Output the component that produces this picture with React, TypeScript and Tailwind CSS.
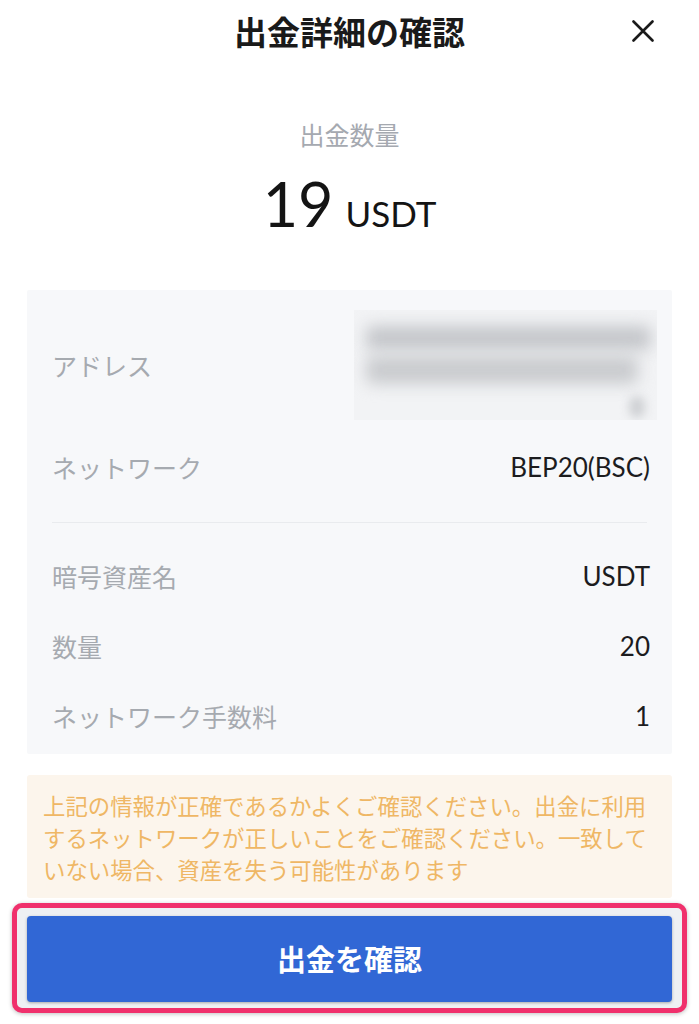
import React from "react";

const jp = "font-['Noto_Sans_CJK_JP','Noto_Sans',sans-serif]";
const lat = "font-['Lato','Noto_Sans_CJK_JP',sans-serif]";

function Row({ label, value }: { label: string; value: string }) {
  return (
    <div className="flex h-[70px] items-center justify-between pl-[25px] pr-[22px]">
      <span className={`${jp} text-[25px] leading-none text-[#a6aab0]`}>{label}</span>
      <span className={`${lat} text-[26px] leading-none text-[#1c1c1e]`}>{value}</span>
    </div>
  );
}

export default function App() {
  return (
    <div className="w-[699px] h-[1024px] bg-white overflow-hidden flex flex-col">
      {/* header */}
      <div className="grid h-[62px] grid-cols-[1fr_auto_1fr] items-center">
        <div />
        <h1 className={`${jp} text-[33px] font-bold leading-none text-[#1a1a1a]`}>出金詳細の確認</h1>
        <div className="flex justify-end pr-[45px]">
          <svg width="22" height="22" viewBox="0 0 22 22" fill="none">
            <path d="M1.5 1.5L20.5 20.5M20.5 1.5L1.5 20.5" stroke="#1a1a1a" strokeWidth="2.6" strokeLinecap="round" />
          </svg>
        </div>
      </div>

      {/* amount */}
      <div className={`${jp} mt-[57px] text-center text-[25px] leading-[30px] text-[#a5a9b0]`}>出金数量</div>
      <div className={`${lat} mt-[24px] flex h-[61px] items-baseline justify-center text-[#141414]`}>
        <span className="text-[61px] leading-none">19</span>
        <span className="ml-[12px] text-[35px] leading-none">USDT</span>
      </div>

      {/* details card */}
      <div className="mx-[27px] mt-[56px] h-[464px] rounded-[2px] bg-[#f7f8fa] pt-[20px]">
        <div className="flex h-[110px] items-center justify-between pl-[25px] pr-[15px]">
          <span className={`${jp} text-[25px] leading-none text-[#a6aab0]`}>アドレス</span>
          <div className="flex h-[110px] w-[303px] flex-col overflow-hidden bg-[#f2f3f5] px-[12px] pt-[16px]">
            <div className="h-[24px] w-[285px] rounded-[6px] bg-[#c4c6ca] blur-[8px]" />
            <div className="mt-[6px] h-[28px] w-[272px] rounded-[6px] bg-[#c9cbce] blur-[8px]" />
            <div className="mt-[12px] flex justify-end">
              <div className="h-[22px] w-[16px] rounded-full bg-[#cfd1d4] blur-[5px]" />
            </div>
          </div>
        </div>
        <div className="mt-[12px]">
          <Row label="ネットワーク" value="BEP20(BSC)" />
        </div>
        <div className="mx-[25px] mt-[20px] h-px bg-[#e9ebee]" />
        <div className="pt-[18px]">
          <Row label="暗号資産名" value="USDT" />
          <Row label="数量" value="20" />
          <Row label="ネットワーク手数料" value="1" />
        </div>
      </div>

      {/* warning */}
      <div className="mx-[27px] mt-[21px] rounded-[3px] bg-[#fcf5ec] pb-[13px] pl-[16px] pr-[18px] pt-[14px]">
        <p className={`${jp} text-[22.4px] leading-[32px] text-[#efb765]`}>
          上記の情報が正確であるかよくご確認ください。出金に利用するネットワークが正しいことをご確認ください。一致していない場合、資産を失う可能性があります
        </p>
      </div>

      {/* button with highlight */}
      <div className="mx-[12px] mt-[5px] rounded-[10px] border-[5px] border-[#f0306c] bg-[#eef0f3] px-[10px] pb-[6px] pt-[8px] shadow-[0_1px_4px_rgba(0,0,0,0.25)]">
        <button className={`${jp} flex h-[86px] w-full items-center justify-center rounded-[4px] bg-[#3167d5] text-[29px] font-bold text-white shadow-[0_1px_3px_rgba(0,0,0,0.3)]`}>
          出金を確認
        </button>
      </div>
    </div>
  );
}
